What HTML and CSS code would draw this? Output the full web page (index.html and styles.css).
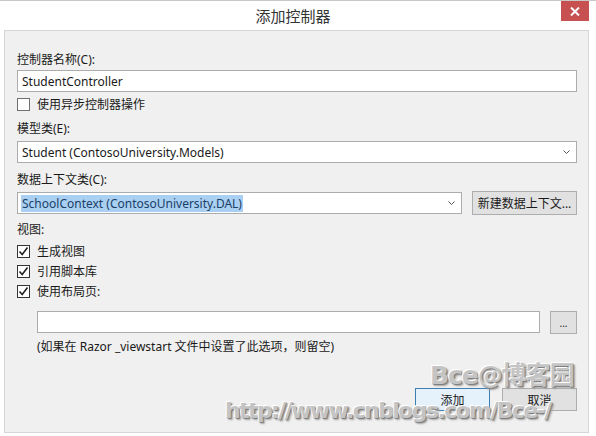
FILE: index.html
```html
<!DOCTYPE html>
<html lang="zh-CN">
<head>
    <meta charset="UTF-8">
    <title>添加控制器</title>
    <link rel="stylesheet" href="styles.css">
</head>
<body>

<div class="window">
    <div class="titlebar">添加控制器</div>
    <div class="close-btn">
        <svg width="10" height="9" viewBox="0 0 10 9"><path d="M1 0.5 L9 8.5 M9 0.5 L1 8.5" stroke="#fff" stroke-width="2"/></svg>
    </div>

    <div class="client">
        <div class="label">控制器名称(C):</div>
        <div class="textbox">StudentController</div>

        <div class="check-row async-row">
            <span class="checkbox"></span>
            <span>使用异步控制器操作</span>
        </div>

        <div class="label label-model">模型类(E):</div>
        <div class="textbox combo">
            <span>Student (ContosoUniversity.Models)</span>
            <svg class="arrow" width="7" height="4" viewBox="0 0 7 4"><path d="M0.5 0.5 L3.5 3.5 L6.5 0.5" fill="none" stroke="#555" stroke-width="1"/></svg>
        </div>

        <div class="label label-context">数据上下文类(C):</div>
        <div class="context-row">
            <div class="textbox combo context-combo">
                <span class="selected">SchoolContext (ContosoUniversity.DAL)</span>
                <svg class="arrow" width="7" height="4" viewBox="0 0 7 4"><path d="M0.5 0.5 L3.5 3.5 L6.5 0.5" fill="none" stroke="#555" stroke-width="1"/></svg>
            </div>
            <div class="button new-button">新建数据上下文...</div>
        </div>

        <div class="label label-view">视图:</div>
        <div class="view-checks">
            <div class="check-row">
                <span class="checkbox checked"><svg width="11" height="11" viewBox="0 0 11 11"><path d="M1.5 5.5 L4.2 8.5 L9.5 1.5" fill="none" stroke="#222" stroke-width="1.6"/></svg></span>
                <span>生成视图</span>
            </div>
            <div class="check-row">
                <span class="checkbox checked"><svg width="11" height="11" viewBox="0 0 11 11"><path d="M1.5 5.5 L4.2 8.5 L9.5 1.5" fill="none" stroke="#222" stroke-width="1.6"/></svg></span>
                <span>引用脚本库</span>
            </div>
            <div class="check-row">
                <span class="checkbox checked"><svg width="11" height="11" viewBox="0 0 11 11"><path d="M1.5 5.5 L4.2 8.5 L9.5 1.5" fill="none" stroke="#222" stroke-width="1.6"/></svg></span>
                <span>使用布局页:</span>
            </div>
        </div>

        <div class="layout-row">
            <div class="textbox layout-box"></div>
            <div class="button browse-button">...</div>
        </div>
        <div class="note">(如果在 Razor _viewstart 文件中设置了此选项，则留空)</div>

        <div class="footer">
            <div class="button default-button">添加</div>
            <div class="button">取消</div>
        </div>
    </div>

    <!-- 水印 -->
    <div class="watermark mark-name">Bce@博客园</div>
    <div class="watermark mark-url">http://www.cnblogs.com/Bce-/</div>
</div>

</body>
</html>
```

FILE: styles.css
```css
body {
    margin: 0;
    padding: 0;
    font-family: "Noto Sans", "Noto Sans CJK SC", sans-serif;
    font-size: 12px;
    color: #1a1a1a;
}
.window {
    width: 596px;
    height: 436px;
    background-color: #fff;
    border-top: 1px solid #c8c8c8;
    box-sizing: border-box;
    position: relative;
    overflow: hidden;
}
.titlebar {
    height: 29px;
    display: flex;
    justify-content: center;
    align-items: center;
    padding-right: 10px;
    font-size: 15px;
    color: #333;
}
.close-btn {
    position: absolute;
    top: 0;
    left: 561px;
    width: 28px;
    height: 20px;
    background-color: #c75050;
    display: flex;
    justify-content: center;
    align-items: center;
}
.client {
    margin: 0 7px 0 4px;
    height: 403px;
    box-sizing: border-box;
    background-color: #f0f0f0;
    border: 1px solid #d6d6d6;
    padding: 21px 11px 0 12px;
}
.label {
    height: 16px;
    line-height: 16px;
    white-space: nowrap;
}
.textbox {
    margin-top: 2px;
    height: 22px;
    box-sizing: border-box;
    background-color: #fff;
    border: 1px solid #acacac;
    display: flex;
    align-items: center;
    padding-left: 4px;
    white-space: nowrap;
}
.combo {
    justify-content: space-between;
    padding-right: 6px;
}
.check-row {
    height: 20px;
    display: flex;
    align-items: center;
    gap: 7px;
}
.async-row {
    margin-top: 2px;
}
.checkbox {
    width: 13px;
    height: 13px;
    box-sizing: border-box;
    background-color: #fff;
    border: 1px solid #707070;
    display: flex;
    justify-content: center;
    align-items: center;
}
.checkbox.checked {
    border-color: #333;
}
.label-model {
    margin-top: 7px;
}
.label-model + .textbox {
    margin-top: 4px;
}
.label-context {
    margin-top: 9px;
}
.context-row {
    margin-top: 3px;
    display: flex;
    align-items: center;
    gap: 10px;
}
.context-combo {
    margin-top: 0;
    flex: 1;
}
.selected {
    background-color: #a9d0f2;
    color: #1c3f66;
    padding: 0 1px;
    margin-left: -1px;
}
.button {
    height: 23px;
    box-sizing: border-box;
    background-color: #e1e1e1;
    border: 1px solid #adadad;
    display: flex;
    justify-content: center;
    align-items: center;
    white-space: nowrap;
}
.new-button {
    width: 105px;
    height: 24px;
}
.label-view {
    margin-top: 7px;
}
.view-checks {
    margin-top: 3px;
}
.layout-row {
    margin-top: 10px;
    margin-left: 20px;
    display: flex;
    gap: 10px;
}
.layout-box {
    margin-top: 0;
    flex: 1;
}
.browse-button {
    width: 27px;
    font-size: 10px;
}
.note {
    margin-top: 5px;
    margin-left: 20px;
    height: 16px;
    line-height: 16px;
    white-space: nowrap;
}
.footer {
    margin-top: 33px;
    display: flex;
    justify-content: flex-end;
    gap: 12px;
}
.footer .button {
    width: 75px;
}
.default-button {
    border-color: #3c7fb1;
    background-color: #e5f1fb;
}
.watermark {
    position: absolute;
    font-family: "DejaVu Sans", "Noto Sans CJK SC", sans-serif;
    font-weight: bold;
    color: #c4c4c4;
    white-space: nowrap;
    text-shadow: -1px -1px 0 #fff, 1px 1px 1px #7a7a7a, 2px 2px 2px #aaa;
    pointer-events: none;
}
.mark-name {
    top: 354px;
    left: 430px;
    font-size: 25px;
    letter-spacing: -1px;
}
.mark-url {
    top: 397px;
    left: 225px;
    font-size: 22px;
    letter-spacing: -1.6px;
}
```
